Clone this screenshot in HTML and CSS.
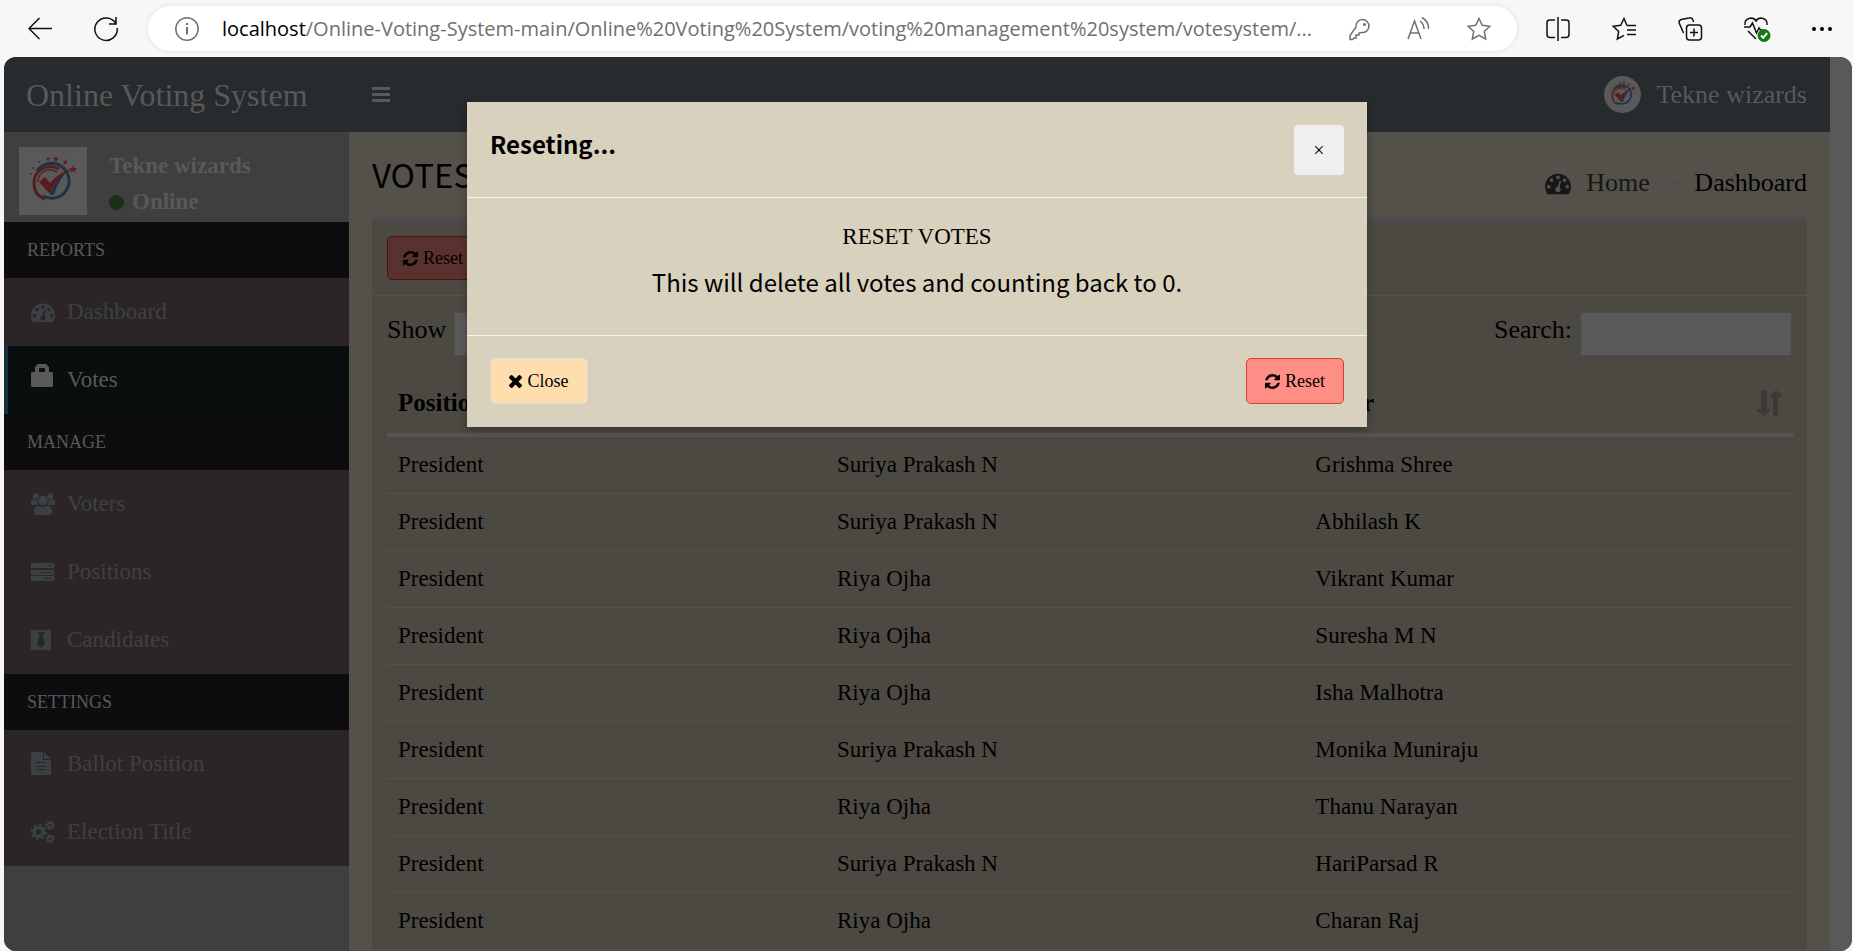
FILE: index.html
```html
<!DOCTYPE html>
<html lang="en">
<head>
<meta charset="utf-8">
<title>Online Voting System</title>
<link rel="stylesheet" href="styles.css">
</head>
<body>
<svg class="defs" aria-hidden="true">
  <symbol id="gauge" viewBox="0 0 1792 1792"><path d="M384 1152q0-53-37.5-90.5t-90.5-37.5-90.5 37.5-37.5 90.5 37.5 90.5 90.5 37.5 90.5-37.5 37.5-90.5zm192-448q0-53-37.5-90.5t-90.5-37.5-90.5 37.5-37.5 90.5 37.5 90.5 90.5 37.5 90.5-37.5 37.5-90.5zm428 481l101-382q6-26-7.5-48.5t-38.5-29.5-48 6.5-30 39.5l-101 382q-60 5-107 43.5t-63 98.5q-20 77 20 146t117 89 146-20 89-117q16-60-6-117t-72-91zm660-33q0-53-37.5-90.5t-90.5-37.5-90.5 37.5-37.5 90.5 37.5 90.5 90.5 37.5 90.5-37.5 37.5-90.5zm-640-640q0-53-37.5-90.5t-90.5-37.5-90.5 37.5-37.5 90.5 37.5 90.5 90.5 37.5 90.5-37.5 37.5-90.5zm448 192q0-53-37.5-90.5t-90.5-37.5-90.5 37.5-37.5 90.5 37.5 90.5 90.5 37.5 90.5-37.5 37.5-90.5zm320 448q0 261-141 483-19 29-54 29h-1402q-35 0-54-29-141-221-141-483 0-182 71-348t191-286 286-191 348-71 348 71 286 191 191 286 71 348z"/></symbol>
  <symbol id="refresh" viewBox="128 128 1536 1536"><path d="M1639 1056q0 5-1 7-64 268-268 434.5t-478 166.5q-146 0-282.5-55t-243.5-157l-129 129q-19 19-45 19t-45-19-19-45v-448q0-26 19-45t45-19h448q26 0 45 19t19 45-19 45l-137 137q71 66 161 102t187 36q134 0 250-65t186-179q11-17 53-117 8-23 30-23h192q13 0 22.5 9.5t9.5 22.5zm25-800v448q0 26-19 45t-45 19h-448q-26 0-45-19t-19-45 19-45l138-138q-148-137-349-137-134 0-250 65t-186 179q-11 17-53 117-8 23-30 23h-199q-13 0-22.5-9.5t-9.5-22.5v-7q65-268 270-434.5t480-166.5q146 0 284 55.5t245 156.5l130-129q19-19 45-19t45 19 19 45z"/></symbol>
  <symbol id="cross" viewBox="302 366 1188 1188"><path d="M1490 1322q0 40-28 68l-136 136q-28 28-68 28t-68-28l-294-294-294 294q-28 28-68 28t-68-28l-136-136q-28-28-28-68t28-68l294-294-294-294q-28-28-28-68t28-68l136-136q28-28 68-28t68 28l294 294 294-294q28-28 68-28t68 28l136 136q28 28 28 68t-28 68l-294 294 294 294q28 28 28 68z"/></symbol>
  <symbol id="sort" viewBox="0 0 26 26"><path d="M4 0h6v19h3v2l-6 5-7-5v-2h4zM16 26V7h-3V5l6-5 6 5v2h-4v19z"/></symbol>
  <symbol id="logo" viewBox="0 0 68 68">
    <rect width="68" height="68" fill="#595959"/>
    <path d="M18 24A17.500 17.500 0 1 1 24 49" fill="none" stroke="#1f3049" stroke-width="3"/>
    <path d="M40 22C28 15 15 24 15 36c0 9 5 14 11 16" fill="none" stroke="#532021" stroke-width="3"/>
    <path d="M38 25C27 19 19 27 19 35" fill="none" stroke="#532021" stroke-width="1.500"/>
    <path d="M20 35l6-5 5 6c7-8 14-12 22-14C42 28 35 37 31 47z" fill="#5a1b1b"/>
    <path d="M31 48c3-9 8-16 16-23-6 8-10 15-12 23z" fill="#1f3049"/>
    <g fill="#5a2021"><path d="M54 18l1 3h3l-2 2 1 3-3-2-3 2 1-3-2-2h3z"/><path d="M46 12l1 2h2l-2 2v2l-1-1-2 1 1-2-1-2h2zM37 9l1 2h2l-2 2v2l-1-1-2 1 1-2-2-2h2zM29 10l1 1h2l-2 1v2l-1-1-1 1v-2l-2-1h2z"/><circle cx="20" cy="15" r="1"/><circle cx="14" cy="21" r="1"/><circle cx="12" cy="27" r="1"/></g>
  </symbol>
</svg>

<header class="browser">
  <button class="tool" aria-label="Back"><svg viewBox="0 0 24 24"><path d="M24 11.500H1M11.500 1L1 11.500 11.500 22"/></svg></button>
  <button class="tool" aria-label="Reload"><svg viewBox="0 0 24 24"><path d="M22 7A11.200 11.200 0 1 0 23.200 11M22 0v7h-7"/></svg></button>
  <div class="address">
    <button class="tool grey" aria-label="Site information"><svg viewBox="0 0 24 24"><circle cx="12" cy="12" r="11.200"/><path d="M12 10v7.500M12 6v2" stroke-width="2"/></svg></button>
    <div class="url" role="textbox" aria-label="Address"><b>localhost</b>/Online-Voting-System-main/Online%20Voting%20System/voting%20management%20system/votesystem/...</div>
    <div class="address-tools">
      <button class="tool grey" aria-label="Passwords"><svg viewBox="0 0 24 24"><path d="M9 10a6.500 6.500 0 1 1 5.500 5.500L12 16v2h-3v3H7l-1.500 1.500H3V18.500z"/><circle cx="17.500" cy="7.500" r=".8"/></svg></button>
      <button class="tool grey" aria-label="Read aloud"><svg viewBox="0 0 24 24"><path d="M1 22L7.500 4 14 22M3.500 16h8M13 4q4 3 4 8M15 .5q7 4 6.500 11.500"/></svg></button>
      <button class="tool grey" aria-label="Add to favorites"><svg viewBox="0 0 24 24"><path d="M12 1.500l3.300 6.800 7.500 1-5.500 5.200 1.400 7.500-6.700-3.600L5.300 22l1.400-7.500L1.200 9.300l7.500-1z"/></svg></button>
    </div>
  </div>
  <div class="browser-tools">
    <button class="tool" aria-label="Split screen"><svg viewBox="0 0 24 24"><path d="M12 0v24M9 3H4Q1 3 1 5.500v12Q1 20.500 4 20.500H9M15 3h5Q23 3 23 5.500v12q0 3-3 3H15"/></svg></button>
    <button class="tool" aria-label="Favorites"><svg viewBox="0 0 24 24"><path d="M15 8.500L12 1.500 8.700 8.300l-7.500 1 5.500 5.200L5.300 22l6.700-3.600M15 8.500h9M15 13h9M15 17.500h9"/></svg></button>
    <button class="tool" aria-label="Collections"><svg viewBox="0 0 24 24"><rect x="8.500" y="8" width="15" height="15" rx="3"/><path d="M16 11.500v8M12 15.500h8M5.500 16L1.200 6q-.7-2.500 2-3.500L11 1q3-.8 4 2l.5 2"/></svg></button>
    <button class="tool" aria-label="Browser essentials"><svg viewBox="0 0 24 24"><path d="M1 8c-1-7 8-9 11-4 3-5 12-3 11 4M0 10h6l2.500-4 4 10 2.500-5 1.500 2h2M4 14l8 8"/><circle cx="20" cy="18.500" r="6.500" fill="#107c10" stroke="none"/><path d="M17 18.500l2.200 2.200 4-4.500" stroke="#fff" stroke-width="2"/></svg></button>
    <button class="tool" aria-label="Settings and more"><svg viewBox="0 0 24 24"><g fill="#000" stroke="none"><circle cx="4" cy="12" r="2"/><circle cx="12" cy="12" r="2"/><circle cx="20" cy="12" r="2"/></g></svg></button>
  </div>
</header>

<div class="page">
  <div class="app">
    <header class="topbar">
      <a class="brand" href="#">Online Voting System</a>
      <button class="burger" aria-label="Toggle navigation"><svg viewBox="0 0 18 15"><path d="M0 0h18v3H0zM0 6h18v3H0zM0 12h18v3H0z"/></svg></button>
      <a class="account" href="#"><svg class="avatar"><use href="#logo"/></svg>Tekne wizards</a>
    </header>
    <div class="columns">
      <aside class="sidebar">
        <div class="user">
          <svg class="portrait"><use href="#logo"/></svg>
          <div class="user-text"><p>Tekne wizards</p><a href="#"><i class="dot"></i>Online</a></div>
        </div>
        <nav>
          <h3>REPORTS</h3>
          <a href="#"><svg><use href="#gauge"/></svg>Dashboard</a>
          <a href="#" class="active"><svg viewBox="0 0 24 24"><path fill-rule="evenodd" d="M1 9h3V4l3-3h8l3 3v5h3l1 1v13l-1 1H1l-1-1V10zM8 9h6V5H8z"/></svg>Votes</a>
          <h3>MANAGE</h3>
          <a href="#"><svg viewBox="0 0 25 24"><circle cx="5" cy="4" r="3.200"/><circle cx="20" cy="4" r="3.200"/><circle cx="12.500" cy="8.500" r="5"/><path d="M0 12V9q0-2 2-2 3 2 5 0-1 3 1 6H2q-2 0-2-1zM25 12V9q0-2-2-2-3 2-5 0 1 3-1 6h6q2 0 2-1zM3 20q0-6 5-6 4 2 9 0 5 0 5 6 0 3-3 3.500H6q-3-.5-3-3.500z"/></svg>Voters</a>
          <a href="#"><svg viewBox="0 0 24 24"><path fill-rule="evenodd" d="M0 3h23v5H0zM16 5h5v1h-5zM0 10h23v5H0zM8 12h13v1H8zM0 16h23v5H0zM13 18h8v1h-8z"/></svg>Positions</a>
          <a href="#"><svg viewBox="0 0 24 24"><path fill-rule="evenodd" d="M0 2h20v20H0zM6 4l2.500 3.500L6 16l4 4 4-4-2.500-8.500L14 4z"/></svg>Candidates</a>
          <h3>SETTINGS</h3>
          <a href="#"><svg viewBox="0 0 24 24"><path fill-rule="evenodd" d="M1 0h11v8h8v15H1l-1-1V1zM5 10v1h10v-1zM5 14v1h10v-1zM5 17v1h10v-1zM13 0l7 7h-7z"/></svg>Ballot Position</a>
          <a href="#"><svg viewBox="0 0 25 24"><g fill="none" stroke="#3b4143"><circle cx="8" cy="12" r="4.700" stroke-width="3.600"/><circle cx="8" cy="12" r="7.200" stroke-width="2.600" stroke-dasharray="2.830 2.830"/><circle cx="20" cy="5" r="2.600" stroke-width="2"/><circle cx="20" cy="5" r="4" stroke-width="1.600" stroke-dasharray="1.570 1.570"/><circle cx="20" cy="19" r="2.600" stroke-width="2"/><circle cx="20" cy="19" r="4" stroke-width="1.600" stroke-dasharray="1.570 1.570"/></g></svg>Election Title</a>
        </nav>
      </aside>
      <main class="content">
        <div class="content-head">
          <h1>VOTES</h1>
          <ol class="crumbs"><li><a href="#"><svg><use href="#gauge"/></svg>Home</a></li><li class="sep" aria-hidden="true">&gt;</li><li>Dashboard</li></ol>
        </div>
        <section class="box">
          <div class="box-head"><button class="btn danger dim"><svg><use href="#refresh"/></svg>Reset</button></div>
          <div class="box-body">
            <div class="filters">
              <label>Show <select><option>10</option></select></label>
              <label>Search: <input type="search"></label>
            </div>
            <table>
              <thead><tr>
                <th class="c1">Position</th>
                <th class="c2">Candidate</th>
                <th><div class="th">Voter<svg class="sort"><use href="#sort"/></svg></div></th>
              </tr></thead>
              <tbody>
                <tr><td>President</td><td>Suriya Prakash N</td><td>Grishma Shree</td></tr>
                <tr><td>President</td><td>Suriya Prakash N</td><td>Abhilash K</td></tr>
                <tr><td>President</td><td>Riya Ojha</td><td>Vikrant Kumar</td></tr>
                <tr><td>President</td><td>Riya Ojha</td><td>Suresha M N</td></tr>
                <tr><td>President</td><td>Riya Ojha</td><td>Isha Malhotra</td></tr>
                <tr><td>President</td><td>Suriya Prakash N</td><td>Monika Muniraju</td></tr>
                <tr><td>President</td><td>Riya Ojha</td><td>Thanu Narayan</td></tr>
                <tr><td>President</td><td>Suriya Prakash N</td><td>HariParsad R</td></tr>
                <tr><td>President</td><td>Riya Ojha</td><td>Charan Raj</td></tr>
              </tbody>
            </table>
          </div>
        </section>
      </main>
    </div>
    <div class="overlay">
      <div class="modal" role="dialog" aria-labelledby="modal-title">
        <div class="modal-head"><h4 id="modal-title">Reseting...</h4><button class="close" aria-label="Close dialog">×</button></div>
        <div class="modal-body"><p>RESET VOTES</p><h2>This will delete all votes and counting back to 0.</h2></div>
        <div class="modal-foot">
          <button class="btn plain"><svg><use href="#cross"/></svg>Close</button>
          <button class="btn danger"><svg><use href="#refresh"/></svg>Reset</button>
        </div>
      </div>
    </div>
  </div>
  <div class="scrollbar"></div>
</div>
</body>
</html>
```
FILE: styles.css
```css
* { box-sizing: border-box; }
body {
  margin: 0;
  height: 100vh;
  display: flex;
  flex-direction: column;
  overflow: hidden;
  background: #f7f7f7;
  color: #000;
  font: 23px/32px "Liberation Serif", serif;
}
h1, h2, h3, h4, p, ol { margin: 0; padding: 0; font-weight: 400; }
a { color: inherit; text-decoration: none; }
button { font: inherit; color: inherit; cursor: pointer; }
svg { display: block; flex: none; fill: currentColor; }
.defs { position: absolute; width: 0; height: 0; }

/* Browser toolbar */
.browser {
  flex: none;
  display: flex;
  align-items: center;
  height: 57px;
  padding: 0 19px 0 28px;
}
.tool { flex: none; width: 24px; height: 24px; padding: 0; border: 0; background: none; color: #111; }
.tool svg { width: 24px; height: 24px; overflow: visible; fill: none; stroke: currentColor; stroke-width: 1.5; }
.tool.grey { color: #707070; }
.tool + .tool { margin-left: 42px; }
.address {
  flex: 1;
  min-width: 0;
  display: flex;
  align-items: center;
  height: 45px;
  margin: 0 29px 0 30px;
  padding: 0 26px 0 27px;
  border-radius: 23px;
  background: #fff;
  box-shadow: 0 0 5px rgba(0, 0, 0, .1);
}
.url {
  flex: 1;
  min-width: 0;
  margin-left: 23px;
  overflow: hidden;
  white-space: nowrap;
  color: #707070;
  font: 20px/30px "Open Sans", sans-serif;
}
.url b { color: #000; font-weight: 400; }
.address-tools, .browser-tools { display: flex; }
.address-tools .tool + .tool { margin-left: 36px; }

/* Application frame */
.page {
  flex: 1;
  min-height: 0;
  display: flex;
  margin: 0 1px 0 4px;
  overflow: hidden;
  border-radius: 12px;
  background: #54514a;
}
.scrollbar { width: 22px; background: #595959; }
.app { position: relative; flex: 1; min-width: 0; display: flex; flex-direction: column; }
.topbar {
  flex: none;
  display: flex;
  align-items: center;
  height: 75px;
  padding-right: 23px;
  background: #272b2d;
  color: #595959;
}
.brand { width: 345px; padding-left: 22px; font-size: 32px; }
.burger { margin-left: 23px; padding: 0; border: 0; background: none; }
.burger svg { width: 18px; height: 15px; }
.account { display: flex; align-items: center; gap: 15px; margin-left: auto; font-size: 26px; }
.avatar { width: 37px; height: 37px; border-radius: 50%; }
.columns { flex: 1; min-height: 0; display: flex; }

/* Sidebar */
.sidebar { flex: none; width: 345px; background: #3f3f3f; }
.user { display: flex; gap: 22px; height: 90px; padding: 15px; color: #595959; font-size: 23px; }
.user p, .user a { font-weight: 700; }
.portrait { width: 68px; height: 68px; }
.user-text { display: flex; flex-direction: column; gap: 4px; padding-top: 3px; }
.user-text a { display: flex; align-items: center; gap: 8px; }
.dot { width: 15px; height: 15px; border-radius: 50%; background: #193017; }
.sidebar h3 { padding-left: 23px; background: #0d0d0f; color: #595959; font-size: 18px; line-height: 56px; }
.sidebar nav a {
  display: flex;
  align-items: center;
  gap: 12px;
  height: 68px;
  padding-left: 23px;
  border-left: 4px solid #2b2528;
  background: #2b2528;
  color: #3b4143;
}
.sidebar nav svg { width: 24px; height: 24px; }
.sidebar nav a.active { border-color: #15303f; background: #0a0e0e; color: #595959; }
.active svg { margin-bottom: 10px; }

/* Content */
.content { flex: 1; min-width: 0; padding: 0 23px; }
.content-head { display: flex; justify-content: space-between; height: 85px; }
h1 { padding-top: 22px; font: 33px/40px "Noto Sans CJK SC", sans-serif; }
.crumbs { display: flex; gap: 15px; padding-top: 35px; list-style: none; font-size: 26px; }
.crumbs a { display: flex; align-items: center; gap: 15px; color: #161616; }
.crumbs svg { width: 26px; height: 26px; }
.sep { color: #4b4b4b; }
.box { border-top: 4px solid #494b50; border-radius: 4px; background: #4c4942; }
.box-head { padding: 15px; border-bottom: 1px solid #555352; }
.box-body { padding: 16px 13px 0 15px; }
.filters { display: flex; justify-content: space-between; height: 68px; padding-right: 2px; font-size: 26px; }
.filters label { display: flex; gap: 8px; height: 44px; line-height: 36px; }
.filters input, .filters select {
  width: 212px;
  height: 44px;
  border: 1px solid #4a4b50;
  border-radius: 0;
  background: #595959;
  font: inherit;
}
.filters select { width: 112px; padding: 0 18px; }
table { width: 100%; border-collapse: separate; border-spacing: 0; table-layout: fixed; }
th { height: 57px; padding: 0 11px 8px; border-bottom: 4px solid #555; text-align: left; font-size: 25px; }
.c1 { width: 31.2%; }
.c2 { width: 34%; }
.th { display: flex; align-items: center; justify-content: space-between; }
.sort { width: 26px; height: 26px; color: #3c3a35; }
td { height: 57px; padding: 0 11px; border-bottom: 1px solid #555352; }

/* Buttons */
.btn {
  display: flex;
  align-items: center;
  justify-content: center;
  gap: 5px;
  min-width: 98px;
  height: 46px;
  padding: 0 15px;
  border: 1px solid #dd3b2b;
  border-radius: 5px;
  background: #ff8e86;
  font-size: 18px;
}
.btn svg { width: 15px; height: 15px; }
.btn.plain { border-color: #ddd; background: #ffdead; }
.btn.plain svg { width: 13px; height: 13px; }
.btn.dim { min-width: 92px; height: 44px; border-color: #4d1410; background: #59312e; }

/* Dialog */
.overlay { position: absolute; inset: 0; padding-top: 45px; }
.modal {
  width: 900px;
  max-width: 90%;
  margin: 0 auto;
  background: #d8d1bd;
  box-shadow: 0 3px 8px rgba(0, 0, 0, .3);
}
.modal-head { display: flex; justify-content: space-between; padding: 23px 23px 22px; border-bottom: 1px solid #f4f4f4; }
h4 { font: 700 24px/38px "Noto Sans CJK SC", sans-serif; }
.close { width: 50px; height: 50px; padding: 0; border: 0; border-radius: 4px; background: #efefef; font-size: 20px; line-height: 50px; }
.modal-body { padding: 23px 23px 34px; text-align: center; }
h2 { margin-top: 10px; font: 24px/38px "Noto Sans CJK SC", sans-serif; }
.modal-foot { display: flex; justify-content: space-between; padding: 22px 23px 23px; border-top: 1px solid #f4f4f4; }
```
